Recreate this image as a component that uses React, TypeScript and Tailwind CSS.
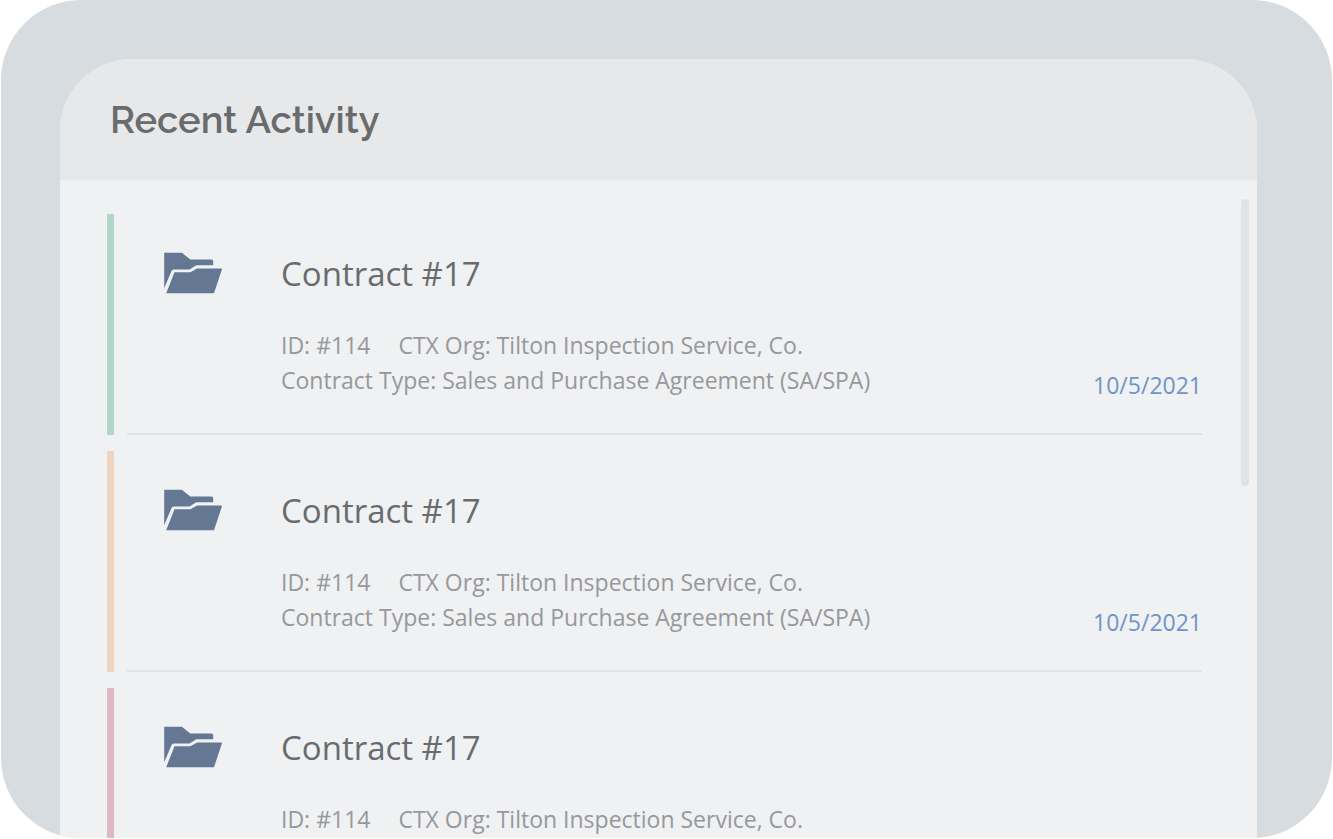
type Activity = {
  id: number;
  title: string;
  reference: string;
  org: string;
  type: string;
  date: string;
  accent: string;
};

const contract = {
  title: "Contract #17",
  reference: "#114",
  org: "Tilton Inspection Service, Co.",
  type: "Sales and Purchase Agreement (SA/SPA)",
  date: "10/5/2021",
};

const activities: Activity[] = [
  { id: 1, ...contract, accent: "bg-[#b2d6c7]" },
  { id: 2, ...contract, accent: "bg-[#efd5bf]" },
  { id: 3, ...contract, accent: "bg-[#dcb8c3]" },
];

function FolderIcon() {
  return (
    <svg
      className="mt-9 h-11 w-15 shrink-0 text-[#647894]"
      viewBox="0 0 60 44"
      fill="currentColor"
      aria-hidden="true"
    >
      <path d="M1.2 2.7H18.8L27.3 9.6H48.2Q50.2 9.6 50.2 11.6V15.2H33.3L26.5 19.4H10.8Q9.2 19.4 8.5 21L1.2 38.2Z" />
      <path d="M11.5 22.3H27.4L34.2 18.4H58Q59.2 18.4 58.8 19.7L51 43.2H3.2Z" />
    </svg>
  );
}

function ActivityRow({ item }: { item: Activity }) {
  return (
    <li className="flex h-[221px] shrink-0 gap-[13px]">
      <span className={`w-[7px] shrink-0 ${item.accent}`} />
      <article className="flex min-w-0 grow border-b-2 border-[#e2e3e5] pl-9">
        <FolderIcon />
        <div className="ml-[58px] min-w-0 grow pt-9">
          <h2 className="text-[33px] leading-[48px] text-[#6a6b6d]">{item.title}</h2>
          <div className="mt-[30px] text-[23px] leading-[35px] text-[#97989b]">
            <p className="flex gap-7">
              <span>ID: {item.reference}</span>
              <span>CTX Org: {item.org}</span>
            </p>
            <p>Contract Type: {item.type}</p>
          </div>
        </div>
        <time className="self-end pb-8 text-[23px] leading-[32px] text-[#6f94c8]">{item.date}</time>
      </article>
    </li>
  );
}

export default function App() {
  return (
    <div className="h-screen bg-white px-px pb-px font-['Open_Sans',sans-serif]">
      <main className="flex h-full flex-col overflow-hidden rounded-[80px] bg-[#d7dce0] pt-[59px] pr-[75px] pl-[59px]">
        <section className="flex min-h-0 grow flex-col overflow-hidden rounded-t-[72px] bg-[#eff1f3]">
          <header className="flex h-[121px] shrink-0 items-center bg-[#e7e8ea] pl-[50px]">
            <h1 className="font-['Raleway','Lato',sans-serif] text-[38px] leading-[48px] font-semibold text-[#6a6b6d]">
              Recent Activity
            </h1>
          </header>
          <div className="relative min-h-0 grow">
            <ul className="flex h-full flex-col gap-4 overflow-y-auto pt-[34px] pr-[55px] pl-[47px] [scrollbar-width:none]">
              {activities.map((item) => (
                <ActivityRow key={item.id} item={item} />
              ))}
            </ul>
            <span className="absolute top-[19px] right-2 h-[287px] w-2 rounded-sm bg-[#e1e2e4]" />
          </div>
        </section>
      </main>
    </div>
  );
}
